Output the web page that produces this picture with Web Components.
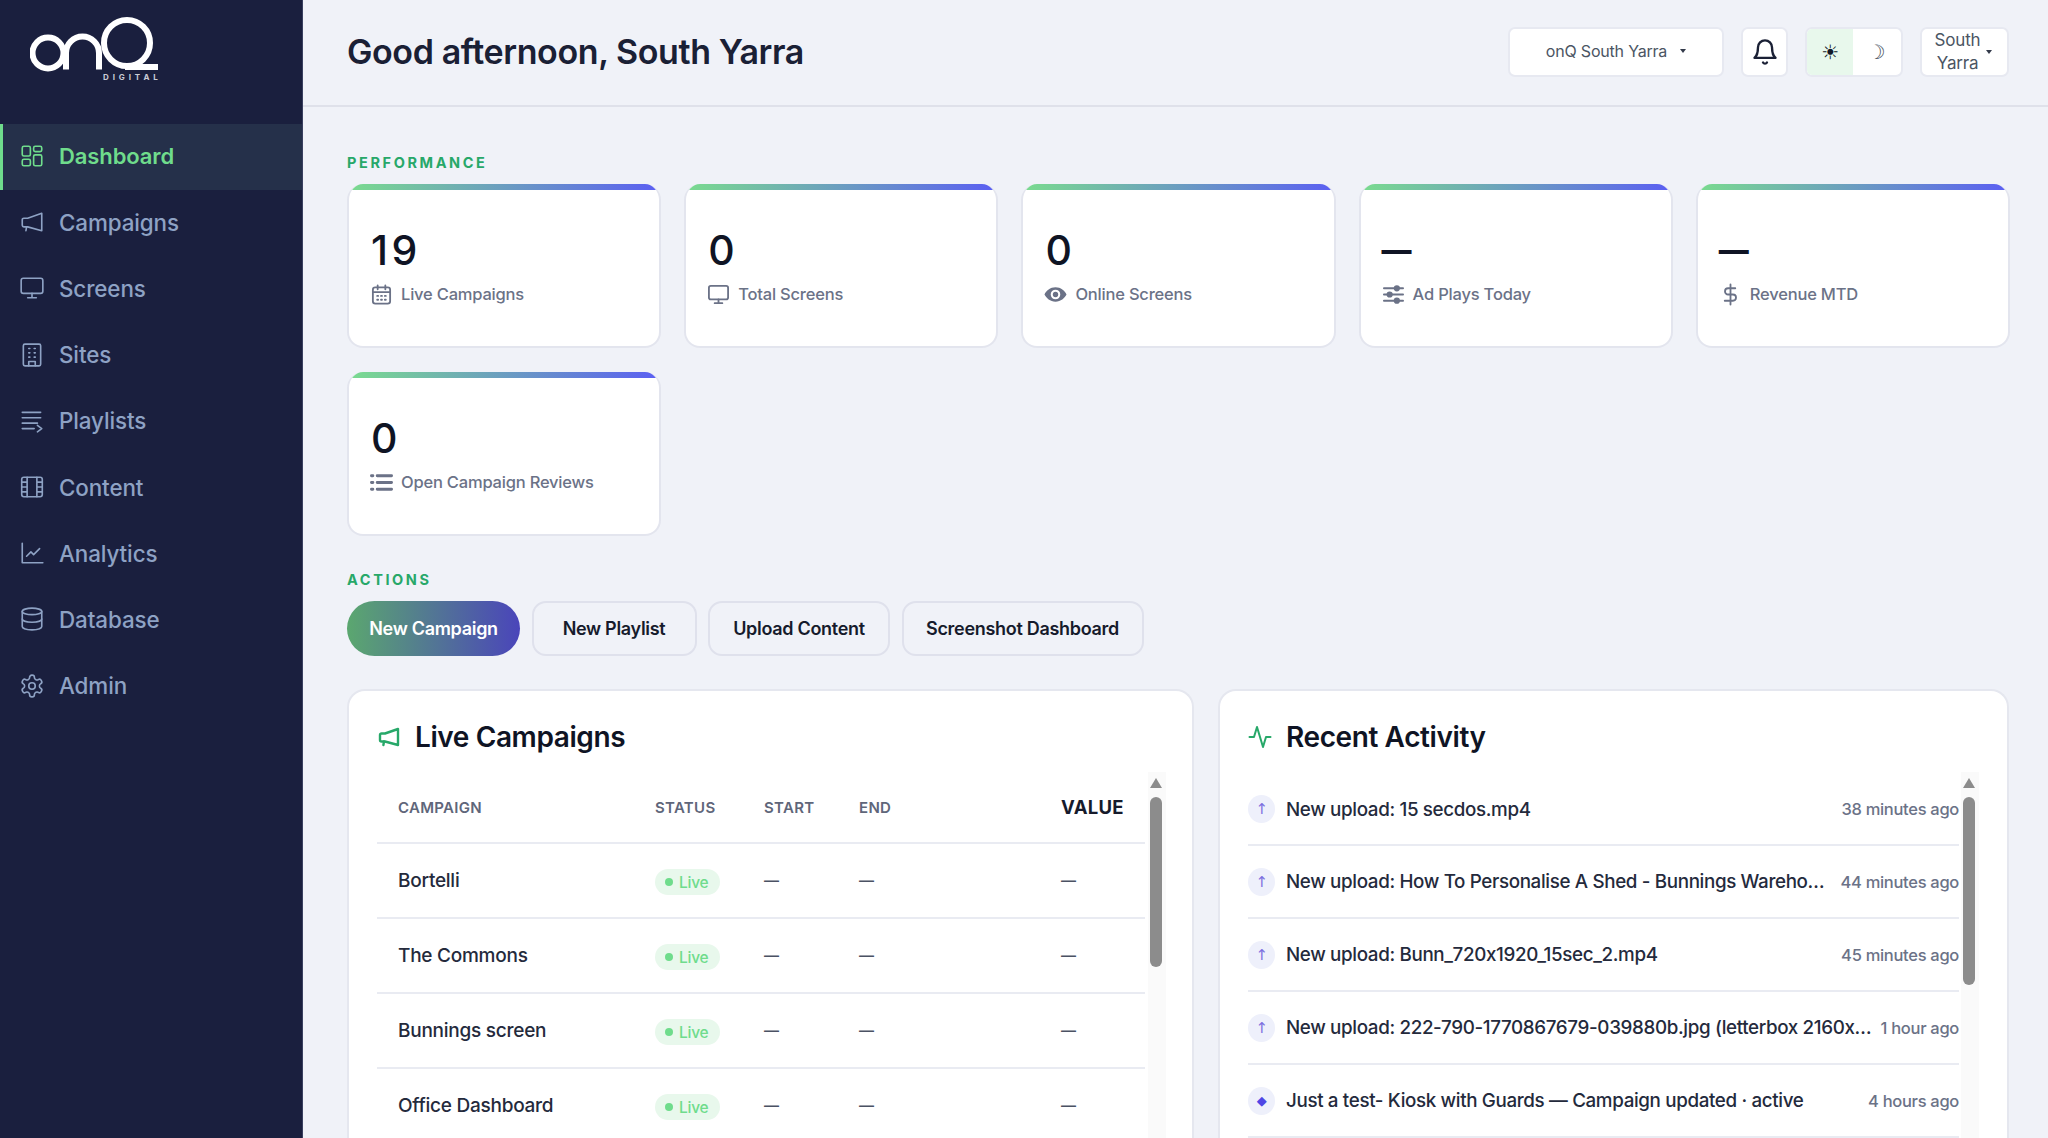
<!DOCTYPE html>
<html>
<head>
<meta charset="utf-8">
<title>onQ Digital Dashboard</title>
<style>
  html, body { margin: 0; height: 100%; overflow: hidden; background: #f0f2f8; }
  body { font-family: "Inter", "Liberation Sans", sans-serif; color: #1a2035; }
</style>
</head>
<body>
<app-shell>
  <side-nav slot="side">
    <nav-item icon="dashboard" active>Dashboard</nav-item>
    <nav-item icon="megaphone">Campaigns</nav-item>
    <nav-item icon="monitor">Screens</nav-item>
    <nav-item icon="building">Sites</nav-item>
    <nav-item icon="playlist">Playlists</nav-item>
    <nav-item icon="film">Content</nav-item>
    <nav-item icon="chart">Analytics</nav-item>
    <nav-item icon="database">Database</nav-item>
    <nav-item icon="gear">Admin</nav-item>
  </side-nav>

  <top-bar slot="top">Good afternoon, South Yarra</top-bar>

  <section-label>PERFORMANCE</section-label>
  <stat-grid>
    <stat-card value="19" icon="calendar">Live Campaigns</stat-card>
    <stat-card value="0" icon="monitor">Total Screens</stat-card>
    <stat-card value="0" icon="eye">Online Screens</stat-card>
    <stat-card value="—" icon="sliders">Ad Plays Today</stat-card>
    <stat-card value="—" icon="dollar">Revenue MTD</stat-card>
    <stat-card value="0" icon="list">Open Campaign Reviews</stat-card>
  </stat-grid>

  <section-label class="second">ACTIONS</section-label>
  <action-row>
    <action-button primary>New Campaign</action-button>
    <action-button style="width:165px">New Playlist</action-button>
    <action-button style="width:182px">Upload Content</action-button>
    <action-button style="width:242px">Screenshot Dashboard</action-button>
  </action-row>

  <panel-grid>
    <info-panel heading="Live Campaigns" icon="megaphone" thumb="170">
      <campaign-row head><span>CAMPAIGN</span><span>STATUS</span><span>START</span><span>END</span><span>VALUE</span></campaign-row>
      <campaign-row name="Bortelli"></campaign-row>
      <campaign-row name="The Commons"></campaign-row>
      <campaign-row name="Bunnings screen"></campaign-row>
      <campaign-row name="Office Dashboard"></campaign-row>
    </info-panel>
    <info-panel heading="Recent Activity" icon="pulse" thumb="188" wide>
      <activity-row when="38 minutes ago">New upload: 15 secdos.mp4</activity-row>
      <activity-row when="44 minutes ago">New upload: How To Personalise A Shed - Bunnings Wareho…</activity-row>
      <activity-row when="45 minutes ago">New upload: Bunn_720x1920_15sec_2.mp4</activity-row>
      <activity-row when="1 hour ago">New upload: 222-790-1770867679-039880b.jpg (letterbox 2160x…</activity-row>
      <activity-row when="4 hours ago" kind="update">Just a test- Kiosk with Guards — Campaign updated · active</activity-row>
    </info-panel>
  </panel-grid>
</app-shell>

<script>
// --- Icon paths ---
const ICONS = {
  dashboard: '<rect x="3" y="3" width="7.5" height="9" rx="1.5"/><rect x="13.5" y="3" width="7.5" height="5" rx="1.5"/><rect x="13.5" y="11" width="7.5" height="10" rx="1.5"/><rect x="3" y="15" width="7.5" height="6" rx="1.5"/>',
  megaphone: '<path d="M21 4v16l-13-3.5H4.5A1.5 1.5 0 0 1 3 15v-5a1.5 1.5 0 0 1 1.5-1.5H8z"/><path d="M7 16.5 6.4 20"/>',
  monitor: '<rect x="2" y="3" width="20" height="14" rx="2"/><path d="M12 17v4M8 21h8"/>',
  building: '<rect x="4" y="2" width="16" height="20" rx="1.5"/><path d="M9 22v-4h6v4M9 6h1M14 6h1M9 10h1M14 10h1M9 14h1M14 14h1"/>',
  playlist: '<path d="M3 4h17M3 9h17M3 14h14M3 19h11M17 16l4 3-4 3"/>',
  film: '<rect x="2.5" y="3" width="19" height="18" rx="2"/><path d="M7.5 3v18M16.500 3v18M2.500 7.500h5M2.500 12h5M2.500 16.500h5M16.500 7.500h5M16.500 12h5M16.500 16.500h5"/>',
  chart: '<path d="M3 3v18h19M7 15l4-4 2.500 2.500L19 8"/>',
  database: '<ellipse cx="12" cy="5" rx="9" ry="3"/><path d="M3 5v14c0 1.700 4 3 9 3s9-1.300 9-3V5"/><path d="M3 12c0 1.700 4 3 9 3s9-1.300 9-3"/>',
  gear: '<path d="M12.220 2h-.44a2 2 0 0 0-2 2v.18a2 2 0 0 1-1 1.730l-.43.25a2 2 0 0 1-2 0l-.15-.08a2 2 0 0 0-2.730.73l-.22.38a2 2 0 0 0 .73 2.730l.15.1a2 2 0 0 1 1 1.720v.51a2 2 0 0 1-1 1.740l-.15.09a2 2 0 0 0-.73 2.730l.22.38a2 2 0 0 0 2.730.73l.15-.08a2 2 0 0 1 2 0l.43.25a2 2 0 0 1 1 1.730V20a2 2 0 0 0 2 2h.44a2 2 0 0 0 2-2v-.18a2 2 0 0 1 1-1.730l.43-.25a2 2 0 0 1 2 0l.15.08a2 2 0 0 0 2.730-.73l.22-.39a2 2 0 0 0-.73-2.730l-.15-.08a2 2 0 0 1-1-1.740v-.5a2 2 0 0 1 1-1.740l.15-.09a2 2 0 0 0 .73-2.730l-.22-.38a2 2 0 0 0-2.730-.73l-.15.08a2 2 0 0 1-2 0l-.43-.25a2 2 0 0 1-1-1.730V4a2 2 0 0 0-2-2z"/><circle cx="12" cy="12" r="3"/>',
  calendar: '<rect x="3" y="4.500" width="18" height="17" rx="2.500"/><path d="M3 9.500h18M8 2.500v4M16 2.500v4M7.500 13.500h1M11.500 13.500h1M15.500 13.500h1M7.500 17.500h1M11.500 17.500h1M15.500 17.500h1"/>',
  eye: '<path fill="currentColor" stroke="none" fill-rule="evenodd" d="M12 4.500C6.500 4.500 2.300 8.300.5 12c1.800 3.700 6 7.500 11.500 7.500s9.700-3.800 11.500-7.500c-1.800-3.700-6-7.500-11.500-7.500zM12 7a5 5 0 1 1 0 10 5 5 0 0 1 0-10z"/><circle cx="12" cy="12" r="2.800" fill="currentColor" stroke="none"/>',
  sliders: '<path d="M2 5.500h20M2 12h20M2 18.500h20"/><circle cx="15.500" cy="5.500" r="2.300" fill="currentColor"/><circle cx="8" cy="12" r="2.300" fill="currentColor"/><circle cx="15.500" cy="18.500" r="2.300" fill="currentColor"/>',
  dollar: '<path d="M12 1.500v21M17 5.500H9.500a3.250 3.250 0 0 0 0 6.500h5a3.250 3.250 0 0 1 0 6.500H6"/>',
  list: '<path stroke-width="3" d="M7.500 5h15M7.500 12h15M7.500 19h15"/><path stroke-width="3" d="M1.500 5h1.500M1.500 12h1.500M1.500 19h1.500"/>',
  pulse: '<path d="M1.500 12H6l3-10 6 20 3-10h4.500"/>',
  bell: '<path d="M6 8a6 6 0 0 1 12 0c0 7 3 9 3 9H3s3-2 3-9"/><path d="M10.300 21a1.940 1.940 0 0 0 3.400 0"/>'
};

function iconSvg(name, size, strokeWidth) {
  return `<svg xmlns="http://www.w3.org/2000/svg" width="${size}" height="${size}" viewBox="0 0 24 24" fill="none" stroke="currentColor" stroke-width="${strokeWidth}" stroke-linecap="round" stroke-linejoin="round">${ICONS[name]}</svg>`;
}

// small base class, every element only has to hand over its markup
class ShadowElement extends HTMLElement {
  connectedCallback() {
    if (this.shadowRoot) return;
    this.attachShadow({ mode: 'open' });
    this.shadowRoot.innerHTML = this.render();
  }
}

// --- Page frame ---
class AppShell extends ShadowElement {
  render() {
    return `
      <style>
        :host { display: flex; width: 2048px; height: 1138px; overflow: hidden; }
        .main { flex: 1; min-width: 0; display: flex; flex-direction: column; }
        .content { padding: 46px 38px 0 44px; }
      </style>
      <slot name="side"></slot>
      <div class="main">
        <slot name="top"></slot>
        <div class="content"><slot></slot></div>
      </div>`;
  }
}
customElements.define('app-shell', AppShell);

class SideNav extends ShadowElement {
  render() {
    return `
      <style>
        :host { display: block; flex: none; width: 303px; height: 1138px; box-sizing: border-box; background: #1a1f3e; border-right: 1px solid #3a4060; }
        .brand { height: 124px; box-sizing: border-box; padding: 17px 0 0 30px; }
        .brand svg { display: block; }
        .digital { display: block; margin: 0 0 0 73px; font: 700 8px "Inter", sans-serif; letter-spacing: 3.900px; color: #c9ccd6; line-height: 10px; }
      </style>
      <div class="brand">
        <svg width="130" height="55" viewBox="0 0 130 55" fill="none" stroke="#fff" stroke-width="6">
          <circle cx="18" cy="36" r="15.500"/>
          <path d="M36 52.500V36a15 15 0 0 1 33 0v16.500"/>
          <circle cx="97" cy="26" r="23"/>
          <path d="M95 50h33"/>
        </svg>
        <span class="digital">DIGITAL</span>
      </div>
      <slot></slot>`;
  }
}
customElements.define('side-nav', SideNav);

class NavItem extends ShadowElement {
  render() {
    return `
      <style>
        :host { display: flex; align-items: center; height: 66.200px; box-sizing: border-box; padding: 0 0 2px 19px; gap: 14px; color: #8ea2c4; font: 500 22.400px "Inter", sans-serif; letter-spacing: -.1px; }
        :host([active]) { color: #6fdc8c; background: #25304a; border-left: 3px solid #6fdc8c; padding-left: 16px; font-weight: 600; font-size: 22px; }
        svg { flex: none; }
      </style>
      ${iconSvg(this.getAttribute('icon'), 26, 1.5)}
      <slot></slot>`;
  }
}
customElements.define('nav-item', NavItem);

class TopBar extends ShadowElement {
  render() {
    return `
      <style>
        :host { display: flex; align-items: center; flex: none; height: 107px; box-sizing: border-box; border-bottom: 2px solid #dfe1ea; padding: 0 39px 2px 44px; gap: 17px; }
        h1 { margin: 0 auto 0 0; font: 600 34px "Inter", sans-serif; letter-spacing: -.4px; color: #1a2035; }
        .box { box-sizing: border-box; height: 50px; background: #fff; border: 2px solid #e7e9f1; border-radius: 7px; display: flex; align-items: center; justify-content: center; color: #4b5563; font-size: 16px; letter-spacing: -.2px; }
        .caret { width: 0; height: 0; border: 3px solid transparent; border-top: 4px solid #333a4a; border-bottom: 0; }
        .site { width: 216px; gap: 13px; padding-bottom: 2px; }
        .bell { width: 47px; color: #1a2035; }
        .theme { width: 98px; overflow: hidden; font-family: "DejaVu Sans", sans-serif; }
        .theme span { flex: 1; align-self: stretch; display: flex; align-items: center; justify-content: center; }
        .sun { background: #e8f8ec; color: #111827; font-size: 20px; }
        .moon { color: #4b5563; font-size: 20px; padding-right: 2px; }
        .user { width: 89px; gap: 6px; font-size: 17px; line-height: 23px; text-align: center; padding: 0 2px 0 0; }
      </style>
      <h1><slot></slot></h1>
      <div class="box site">onQ South Yarra<i class="caret"></i></div>
      <div class="box bell">${iconSvg('bell', 28, 2)}</div>
      <div class="box theme"><span class="sun">☀</span><span class="moon">☽</span></div>
      <div class="box user"><div>South<br>Yarra</div><i class="caret"></i></div>`;
  }
}
customElements.define('top-bar', TopBar);

class SectionLabel extends ShadowElement {
  render() {
    return `
      <style>
        :host { display: block; height: 20px; margin-bottom: 11px; font: 700 14.500px/20px "Inter", sans-serif; letter-spacing: 2.600px; color: #27a869; }
        :host(.second) { margin-top: 34px; }
      </style>
      <slot></slot>`;
  }
}
customElements.define('section-label', SectionLabel);

// --- Stat cards ---
class StatGrid extends ShadowElement {
  render() {
    return `
      <style>:host { display: grid; grid-template-columns: repeat(5, 1fr); gap: 24px 23px; }</style>
      <slot></slot>`;
  }
}
customElements.define('stat-grid', StatGrid);

class StatCard extends ShadowElement {
  render() {
    const value = this.getAttribute('value');
    return `
      <style>
        :host { display: block; height: 164px; box-sizing: border-box; background: #fff; border: 2px solid #e3e5ee; border-top: 0; border-radius: 16px; overflow: hidden; }
        .bar { height: 6px; background: linear-gradient(90deg, #7adb8f, #5b5ff2); }
        .body { padding: 35px 0 0 21px; }
        .value { padding-left: 1px; font: 500 41px/50px "Inter", sans-serif; color: #0f1424; height: 50px; letter-spacing: 3.500px; }
        .value.dash { font-size: 30px; font-weight: 800; letter-spacing: 0; padding-left: 0; }
        .label { display: flex; align-items: center; gap: 8px; margin-top: 5px; height: 28px; color: #6b7287; font: 500 16.500px "Inter", sans-serif; letter-spacing: -.2px; }
      </style>
      <div class="bar"></div>
      <div class="body">
        <div class="value${value === '—' ? ' dash' : ''}">${value}</div>
        <div class="label">${iconSvg(this.getAttribute('icon'), 23, 1.9)}<slot></slot></div>
      </div>`;
  }
}
customElements.define('stat-card', StatCard);

// --- Actions ---
class ActionRow extends ShadowElement {
  render() {
    return `
      <style>:host { display: flex; gap: 11.500px; margin-bottom: 33px; }</style>
      <slot></slot>`;
  }
}
customElements.define('action-row', ActionRow);

class ActionButton extends ShadowElement {
  render() {
    return `
      <style>
        :host { display: flex; align-items: center; justify-content: center; box-sizing: border-box; height: 55px; border: 2px solid #dfe1ec; border-radius: 14px; color: #161b2c; font: 600 18px "Inter", sans-serif; letter-spacing: -.3px; }
        :host([primary]) { width: 173px; border: 0; border-radius: 28px; color: #fff; background: linear-gradient(90deg, #5ba76f, #4a45ba); }
      </style>
      <slot></slot>`;
  }
}
customElements.define('action-button', ActionButton);

// --- Panels ---
class PanelGrid extends ShadowElement {
  render() {
    return `
      <style>:host { display: grid; grid-template-columns: 847px 791px; gap: 24px; }</style>
      <slot></slot>`;
  }
}
customElements.define('panel-grid', PanelGrid);

class InfoPanel extends ShadowElement {
  render() {
    return `
      <style>
        :host { display: block; height: 520px; box-sizing: border-box; background: #fff; border: 2px solid #e5e7ef; border-bottom: 0; border-radius: 18px 18px 0 0; padding: 0 26px 0 28px; }
        :host([wide]) { padding-right: 28px; }
        .head { display: flex; align-items: center; gap: 14px; height: 81px; padding-top: 10px; box-sizing: border-box; font: 600 28px "Inter", sans-serif; letter-spacing: -.4px; color: #0f1424; }
        .head svg { color: #27a869; flex: none; }
        .body { display: flex; gap: 3px; height: 437px; }
        :host([wide]) .body { gap: 2px; }
        :host([wide]) .rows { padding-top: 2px; }
        .rows { flex: 1; min-width: 0; }
        .track { flex: none; width: 18px; background: #fafafa; position: relative; }
        .track i { position: absolute; left: 2px; top: 6px; border-left: 6px solid transparent; border-right: 6px solid transparent; border-bottom: 10px solid #8c8c8c; }
        .track b { position: absolute; left: 2px; top: 25px; width: 12px; height: ${this.getAttribute('thumb')}px; background: #8c8c8c; border-radius: 6px; }
      </style>
      <div class="head">${iconSvg(this.getAttribute('icon'), 24, this.getAttribute('icon') === 'megaphone' ? 2.4 : 2)}<span>${this.getAttribute('heading')}</span></div>
      <div class="body">
        <div class="rows"><slot></slot></div>
        <div class="track"><i></i><b></b></div>
      </div>`;
  }
}
customElements.define('info-panel', InfoPanel);

class CampaignRow extends ShadowElement {
  render() {
    const base = `
        :host { display: grid; grid-template-columns: 257px 109px 95px 202px 1fr; align-items: center; height: 75px; box-sizing: border-box; padding-left: 21px; border-bottom: 2px solid #e9ebf2; font: 500 19px "Inter", sans-serif; letter-spacing: -.25px; color: #242a3c; }
        :host([head]) { height: 72px; color: #5f667a; font-size: 15px; font-weight: 600; letter-spacing: .3px; }
        ::slotted(span:last-child) { color: #161b2c; font-size: 18.500px; font-weight: 700; }
    `;
    if (this.hasAttribute('head')) return `<style>${base}</style><slot></slot>`;
    return `
      <style>${base}
        .badge { display: inline-flex; align-items: center; gap: 6px; width: 65px; height: 26px; box-sizing: border-box; padding-left: 10px; border-radius: 13px; background: #e8f8ec; color: #6fdc8c; font-size: 15.500px; font-weight: 500; margin-top: 3px; }
        .badge::before { content: ""; width: 8px; height: 8px; border-radius: 50%; background: #6fdc8c; }
        .dash { color: #4b5263; font-size: 15px; font-weight: 600; letter-spacing: 0; }
      </style>
      <div>${this.getAttribute('name')}</div>
      <div><span class="badge">Live</span></div>
      <div class="dash">—</div><div class="dash">—</div><div class="dash">—</div>`;
  }
}
customElements.define('campaign-row', CampaignRow);

class ActivityRow extends ShadowElement {
  render() {
    const update = this.getAttribute('kind') === 'update';
    return `
      <style>
        :host { display: flex; align-items: center; height: 73px; box-sizing: border-box; border-bottom: 2px solid #e9ebf2; font: 500 18.800px "Inter", sans-serif; letter-spacing: -.35px; color: #242a3c; }
        :host(:first-child) { height: 72px; }
        .dot { flex: none; width: 27px; height: 28px; margin-right: 11px; border-radius: 50%; background: #eef0fb; display: flex; align-items: center; justify-content: center; color: ${update ? '#4f46e5' : '#7c6fe0'}; font: ${update ? '13px' : '15px'} "DejaVu Sans", sans-serif; }
        .text { flex: 1; min-width: 0; white-space: nowrap; }
        .when { flex: none; margin-left: 6px; color: #6b7287; font-size: 16.500px; letter-spacing: -.3px; }
      </style>
      <span class="dot">${update ? '◆' : '↑'}</span>
      <span class="text"><slot></slot></span>
      <span class="when">${this.getAttribute('when')}</span>`;
  }
}
customElements.define('activity-row', ActivityRow);
</script>
</body>
</html>
